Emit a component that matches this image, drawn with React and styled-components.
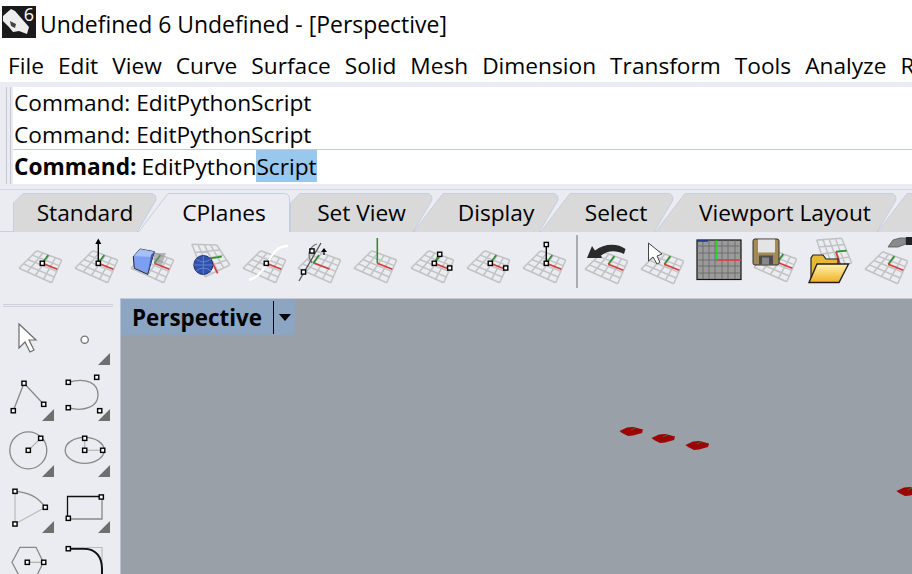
import React from "react";
import styled, { createGlobalStyle } from "styled-components";

const GlobalStyle = createGlobalStyle`
  html, body {
    margin: 0;
    padding: 0;
    background: #ebecf1;
    overflow: hidden;
  }
  * { box-sizing: border-box; }
`;

const Page = styled.div`
  width: 912px;
  height: 574px;
  display: flex;
  flex-direction: column;
  overflow: hidden;
  font-family: "Open Sans", "Noto Sans", sans-serif;
  color: #000;
  background: #ebecf1;
`;

const TitleBar = styled.div`
  height: 48px;
  flex: none;
  display: flex;
  align-items: center;
  gap: 4px;
  padding: 0 0 0 2px;
  background: #fff;
  font-size: 22.95px;
  white-space: nowrap;
`;

const Logo = styled.div`
  position: relative;
  width: 34px;
  height: 32px;
  margin-top: -4px;
  background: #1a1a1a;
  color: #fff;
`;

const LogoNumber = styled.span`
  position: absolute;
  right: 2px;
  top: -4px;
  font-size: 18px;
`;

const MenuBar = styled.div`
  height: 34px;
  flex: none;
  display: flex;
  align-items: center;
  gap: 14px;
  padding: 0 0 0 8px;
  background: #fff;
  font-size: 22.7px;
  white-space: nowrap;
  overflow: hidden;
`;

const CommandDock = styled.div`
  height: 108px;
  flex: none;
  display: flex;
  padding: 5px 0;
  border-bottom: 1px solid #d5d8e2;
`;

const Grip = styled.div`
  width: 13px;
  flex: none;
  &::before {
    content: "";
    display: block;
    margin-left: 6px;
    width: 3px;
    height: 100%;
    border-left: 1px solid #c3c7d3;
    border-right: 1px solid #c3c7d3;
  }
`;

const CommandPanel = styled.div`
  flex: 1;
  background: #fff;
  display: flex;
  flex-direction: column;
  font-size: 22.7px;
  white-space: nowrap;
`;

const HistoryLine = styled.div`
  height: 32px;
  line-height: 32px;
  padding-left: 1px;
`;

const Prompt = styled.div`
  height: 36px;
  line-height: 33px;
  margin-top: -2px;
  padding-left: 1px;
  border-top: 1px solid #c3cad8;
`;

const PromptLabel = styled.b`
  margin-right: 5px;
`;

const Selected = styled.span`
  display: inline-block;
  height: 32px;
  background: #99c8ee;
`;

const ToolDock = styled.div`
  height: 108px;
  flex: none;
  display: flex;
  flex-direction: column;
  padding-top: 3px;
`;

const TabRow = styled.div`
  height: 39px;
  flex: none;
  display: flex;
  padding-left: 13px;
`;

const TabBox = styled.div`
  position: relative;
  flex: none;
  width: ${(p) => p.$width}px;
  margin-left: ${(p) => p.$overlap}px;
  padding-left: ${(p) => p.$inset}px;
  z-index: ${(p) => (p.$active ? 2 : 1)};
  display: flex;
  align-items: center;
  justify-content: center;
  font-size: 22.7px;
  white-space: nowrap;
  span { position: relative; }
  svg {
    position: absolute;
    left: 0;
    top: 0;
  }
`;

const IconRow = styled.div`
  display: flex;
  align-items: flex-start;
  padding: 3px 0 0 16px;
  border-top: 1px solid #c6cfdf;
  margin-top: -1px;
  height: 66px;
  overflow: hidden;
`;

const ToolSlot = styled.div`
  width: 56px;
  height: 56px;
  flex: none;
  svg { display: block; }
`;

const Separator = styled.div`
  width: 2px;
  height: 53px;
  margin-right: 4px;
  flex: none;
  background: #a9acb3;
`;

const Workspace = styled.div`
  flex: 1;
  min-height: 0;
  display: flex;
`;

const SidePanel = styled.div`
  width: 120px;
  flex: none;
  display: flex;
  flex-direction: column;
`;

const SideHandle = styled.div`
  height: 5px;
  margin: 6px 7px 0 3px;
  flex: none;
  border-top: 1px solid #cdd0da;
  &::after {
    content: "";
    display: block;
    margin-top: 1px;
    border-top: 1px solid #cdd0da;
  }
`;

const SideGrid = styled.div`
  display: grid;
  grid-template-columns: 56px 56px;
  grid-auto-rows: 56px;
`;

const Viewport = styled.div`
  position: relative;
  flex: 1;
  background: #9aa0a7;
  border-top: 1px solid #c5c9d2;
  border-left: 1px solid #b9c3d3;
  overflow: hidden;
`;

const ViewTab = styled.div`
  width: 174px;
  height: 36px;
  display: flex;
  align-items: center;
  padding-left: 11px;
  background: #8ba5c3;
  border-bottom-right-radius: 4px;
  font-size: 22.4px;
  font-weight: 700;
  white-space: nowrap;
`;

const ViewName = styled.span`
  width: 141px;
  flex: none;
`;

const ViewMenu = styled.div`
  height: 33px;
  flex: 1;
  display: flex;
  align-items: center;
  justify-content: center;
  border-left: 1px solid #000;
  &::after {
    content: "";
    border-left: 6px solid transparent;
    border-right: 6px solid transparent;
    border-top: 7px solid #000;
  }
`;

const Marker = styled.svg`
  position: absolute;
  left: ${(p) => p.$x}px;
  top: ${(p) => p.$y}px;
`;

// toolbar icon helpers

const lerp = (a, b, t) => [a[0] + (b[0] - a[0]) * t, a[1] + (b[1] - a[1]) * t];

const FLAT_PLANE = [[20.7, 15.7], [45.7, 25], [35.7, 47.7], [3, 33.3]];

const PlaneGrid = ({ dx = 0, dy = 0, corners = FLAT_PLANE }) => {
  const [top, right, bottom, left] = corners;
  const lines = [];
  for (let i = 0; i <= 4; i++) {
    const t = i / 4;
    const a = lerp(top, right, t);
    const b = lerp(left, bottom, t);
    const c = lerp(top, left, t);
    const d = lerp(right, bottom, t);
    lines.push(`M${a[0]} ${a[1]}L${b[0]} ${b[1]}M${c[0]} ${c[1]}L${d[0]} ${d[1]}`);
  }
  return (
    <path
      transform={`translate(${dx} ${dy})`}
      d={lines.join("")}
      fill="none"
      stroke="#c2c2c4"
      strokeWidth="1.5"
    />
  );
};

const Axes = ({ dx = 0, dy = 0 }) => (
  <g transform={`translate(${dx} ${dy})`} fill="none" strokeWidth="1.7">
    <path d="M26.3 28.3L32.3 20" stroke="#2f8f2f" />
    <path d="M26.3 28.3L41.3 34.3" stroke="#d43a3a" />
  </g>
);

const Handle = ({ x, y, size = 4.2 }) => (
  <rect
    x={x - size / 2}
    y={y - size / 2}
    width={size}
    height={size}
    fill="#fff"
    stroke="#000"
    strokeWidth="1.4"
  />
);

const Base = ({ children }) => (
  <>
    <PlaneGrid />
    <Axes />
    {children}
    <Handle x={26.3} y={28.3} />
  </>
);

const toolIcons = [
  <Base key="a" />,
  <Base key="b">
    <path d="M26.3 28V5" stroke="#000" strokeWidth="1.4" />
    <path d="M23.3 9L26.3 3.5L29.3 9Z" fill="#000" />
  </Base>,
  <>
    <PlaneGrid />
    <Axes />
    <path d="M26 18H38L34 30L26 29Z" fill="#8a8a8a" opacity="0.55" />
    <path
      d="M12 14L26.3 16.7L19.7 39.3L6.3 33.3L5.3 21.7Z"
      fill="#7d9ff2"
      stroke="#222"
      strokeWidth="1"
    />
    <path d="M12 14L26.3 16.7L23 22L6 21Z" fill="#a7bff8" />
    <path d="M23 20L26.3 16.7L19.7 39.3Z" fill="#3e5ab5" />
  </>,
  <>
    <PlaneGrid corners={[[7.7, 9.3], [32.7, 10], [46, 30], [21, 41.7]]} />
    <path d="M26 23.3L37.7 21.7" stroke="#2f8f2f" strokeWidth="1.7" />
    <path d="M26 23.3L33.7 38.3" stroke="#d43a3a" strokeWidth="1.7" />
    <circle cx="19.3" cy="30" r="9.5" fill="#3153ad" stroke="#1f2f6c" strokeWidth="1" />
    <path
      d="M10 30H29M19.3 20.5V39.5M12 24Q19 30 27 24M12 36Q19 30 27 36"
      stroke="#6f8ad8"
      strokeWidth="0.8"
      fill="none"
    />
  </>,
  <Base key="e">
    <path d="M48 11C36 11 32 20 26 30C22 37 17 43 9 45" fill="none" stroke="#fff" strokeWidth="2.4" />
  </Base>,
  <>
    <g transform="translate(-1 0)">
      <PlaneGrid />
    </g>
    <path d="M16 28C10 20 14 11 21 9" fill="none" stroke="#777" strokeWidth="1.3" />
    <path d="M3 46L25 8" stroke="#555" strokeWidth="1.3" />
    <path d="M17.5 28L33.5 34" stroke="#d43a3a" strokeWidth="1.8" />
    <path d="M17.5 28L23 20" stroke="#2f8f2f" strokeWidth="1.8" />
    <path d="M25 17L28 13L31 17Z" fill="#000" />
    <path d="M28 14V20" stroke="#000" strokeWidth="1.2" />
    <Handle x={16} y={16} />
    <Handle x={7.5} y={37} />
  </>,
  <>
    <PlaneGrid dx={-1} />
    <path d="M25.3 28.3V3" stroke="#2f8f2f" strokeWidth="1.6" />
    <path d="M25.3 28.3L40.3 34.3" stroke="#d43a3a" strokeWidth="1.7" />
  </>,
  <Base key="h">
    <path d="M26.3 28.3L32 17" stroke="#2f8f2f" strokeWidth="1.4" />
    <Handle x={31.7} y={19.3} />
    <Handle x={41.7} y={33} />
  </Base>,
  <Base key="i">
    <Handle x={41.7} y={33} />
  </Base>,
  <Base key="j">
    <path d="M26.3 28V7" stroke="#000" strokeWidth="1.4" />
    <Handle x={26.3} y={9.5} />
  </Base>,
];

const rightIcons = [
  <>
    <PlaneGrid dy={1} />
    <Axes dy={1} />
    <path
      d="M5 23L10 11L13 15.5C22 8 36 8 43.5 14L42 19C34 15 26 15 19 20.5L20 23Z"
      fill="#2a2a2a"
    />
  </>,
  <>
    <PlaneGrid dy={1} />
    <Axes dy={1} />
    <path
      d="M10.5 8V26L15 22L19 29L22 27.5L19 21L24 19Z"
      fill="#fff"
      stroke="#444"
      strokeWidth="1"
    />
  </>,
  <>
    <rect x="3" y="5" width="44" height="39.5" fill="#9b9b9b" stroke="#111" strokeWidth="1.2" />
    <path
      d="M9 5V44M15 5V44M21 5V44M28 5V44M34 5V44M41 5V44M3 11H47M3 18H47M3 25H47M3 31H47M3 38H47"
      stroke="#666"
      strokeWidth="0.8"
      fill="none"
    />
    <path d="M3.5 6H14" stroke="#223a90" strokeWidth="1.6" />
    <path d="M22.7 5.5V25" stroke="#2fd02f" strokeWidth="1.6" />
    <path d="M22.7 25H47" stroke="#e04545" strokeWidth="1.6" />
  </>,
  <>
    <PlaneGrid dx={1} dy={-1} />
    <Axes dx={1} dy={-1} />
    <rect x="3" y="4" width="26" height="26" rx="2" fill="#a08a55" stroke="#333" strokeWidth="1" />
    <rect x="8" y="4.5" width="17" height="13" fill="#e4e4e4" />
    <rect x="9" y="20.5" width="14" height="9" fill="#4c4c4c" />
    <rect x="12" y="22.5" width="7" height="7" fill="#888" />
  </>,
  <>
    <PlaneGrid corners={[[10.7, 5], [35.7, 3.3], [45.7, 28.3], [20, 33]]} />
    <path d="M30 16.7L40.7 15.7" stroke="#2f8f2f" strokeWidth="1.7" />
    <path d="M30 16.7L34 29.3" stroke="#d43a3a" strokeWidth="1.9" />
    <defs>
      <linearGradient id="folderFill" x1="0" y1="0" x2="0" y2="1">
        <stop offset="0" stopColor="#fff3b0" />
        <stop offset="1" stopColor="#f0b020" />
      </linearGradient>
    </defs>
    <path d="M5 46V23L7 20H17L20 24H32V29" fill="#e8b830" stroke="#222" strokeWidth="1.2" />
    <path d="M3 47.5L11 29H42.5L33 47.5Z" fill="url(#folderFill)" stroke="#222" strokeWidth="1.4" />
  </>,
  <>
    <PlaneGrid dy={1} />
    <Axes dy={1} />
    <path d="M26 12L31 5L38 3H44V9L36 12Z" fill="#8a8a8a" stroke="#555" strokeWidth="0.8" />
    <path d="M44 2H50V10H44Z" fill="#222" />
  </>,
];

const Corner = () => <path d="M42 56L54 44V56Z" fill="#6f6f6f" />;

const sideIcons = [
  <>
    <path
      d="M19 15L36 31H29L34 41L30 43L25 33L19 39Z"
      fill="#fff"
      stroke="#6b6b6b"
      strokeWidth="1.2"
    />
  </>,
  <>
    <circle cx="28.7" cy="30.7" r="3.6" fill="#fff" stroke="#777" strokeWidth="1.4" />
    <Corner />
  </>,
  <>
    <path d="M13.3 45.7L24 18.3L43.7 39.3" fill="none" stroke="#888" strokeWidth="1.3" />
    <Handle x={24} y={18.3} />
    <Handle x={13.3} y={45.7} />
    <Handle x={43.7} y={39.3} />
    <Corner />
  </>,
  <>
    <path d="M12.3 17.3C30 12 42 18 42 30C42 42 28 47 12.3 42.7" fill="none" stroke="#888" strokeWidth="1.3" />
    <Handle x={12.3} y={17.3} />
    <Handle x={40.7} y={12.3} />
    <Handle x={12.3} y={42.7} />
    <Handle x={43.7} y={45.7} />
    <Corner />
  </>,
  <>
    <circle cx="28.3" cy="29.3" r="18.5" fill="none" stroke="#888" strokeWidth="1.3" />
    <path d="M28.3 29.3L40.7 17.3" stroke="#aaa" strokeWidth="1.1" />
    <Handle x={28.3} y={29.3} />
    <Handle x={40.7} y={17.3} />
    <Corner />
  </>,
  <>
    <ellipse cx="28.7" cy="29.3" rx="19.5" ry="13" fill="none" stroke="#888" strokeWidth="1.3" />
    <path d="M28.7 17.3V29.3H46.7" fill="none" stroke="#aaa" strokeWidth="1.1" />
    <Handle x={28.7} y={29.3} />
    <Handle x={28.7} y={17.3} />
    <Handle x={46.7} y={29.3} />
    <Corner />
  </>,
  <>
    <path d="M15 14.3V47L45.3 30.3" fill="none" stroke="#bbb" strokeWidth="1.2" />
    <path d="M15 14.3C28 15 39 21 45.3 30.3" fill="none" stroke="#888" strokeWidth="1.3" />
    <Handle x={15} y={14.3} />
    <Handle x={45.3} y={30.3} />
    <Handle x={15} y={47} />
    <Corner />
  </>,
  <>
    <path d="M11.5 42H46V20" fill="none" stroke="#888" strokeWidth="1.3" />
    <path d="M11.5 41V19.5H45" fill="none" stroke="#111" strokeWidth="1.3" />
    <Handle x={12.3} y={41.3} />
    <Handle x={45.3} y={20} />
    <Corner />
  </>,
  <>
    <path d="M12 29.3L20 14.3H36L43.3 29.3L36 44.3H20Z" fill="none" stroke="#888" strokeWidth="1.3" />
    <path d="M27.3 29.3H43.7" stroke="#aaa" strokeWidth="1.1" />
    <Handle x={27.3} y={29.3} />
    <Handle x={43.7} y={29.3} />
  </>,
  <>
    <path d="M30 14.5H46V36" fill="none" stroke="#bbb" strokeWidth="1.2" />
    <path d="M12.3 15.7H28C40 15.7 46 24 46 36V56" fill="none" stroke="#111" strokeWidth="2" />
    <Handle x={12.3} y={15.7} />
  </>,
];

const tabs = [
  { label: "Standard", width: 144, overlap: 0, inset: 0, notch: true },
  { label: "CPlanes", width: 152, overlap: -19, inset: 20, active: true },
  { label: "Set View", width: 143, overlap: 0, inset: 0, notch: true },
  { label: "Display", width: 146, overlap: -20, inset: 20 },
  { label: "Select", width: 134, overlap: -19, inset: 18 },
  { label: "Viewport Layout", width: 242, overlap: -19, inset: 18 },
  { label: "", width: 60, overlap: -20, inset: 0 },
];

const tabPath = ({ width: w, notch, active }) => {
  const left = notch ? "M0.5 39V10L10 0.5" : "M0.5 39L30 0.5";
  const right = active
    ? `H${w - 6}Q${w - 0.5} 0.5 ${w - 0.5} 7V39`
    : `H${w - 6}Q${w - 1} 0.5 ${w - 1} 7L${w - 20} 39`;
  return `${left}${right}`;
};

function Tab(props) {
  const { label, width, overlap, inset, active } = props;
  return (
    <TabBox $width={width} $overlap={overlap} $inset={inset} $active={active}>
      <svg width={width} height="40" viewBox={`0 0 ${width} 40`}>
        <path
          d={tabPath(props)}
          fill={active ? "#ebecf1" : "#d9d9d9"}
          stroke="#c5cfe0"
          strokeWidth="1"
        />
      </svg>
      <span>{label}</span>
    </TabBox>
  );
}

const ToolIcon = ({ children }) => (
  <ToolSlot>
    <svg width="56" height="56" viewBox="0 0 56 56">
      {children}
    </svg>
  </ToolSlot>
);

const menus = [
  "File",
  "Edit",
  "View",
  "Curve",
  "Surface",
  "Solid",
  "Mesh",
  "Dimension",
  "Transform",
  "Tools",
  "Analyze",
  "Render",
];

const markers = [
  { x: 498, y: 127 },
  { x: 530, y: 134 },
  { x: 564, y: 141 },
  { x: 775, y: 187 },
];

export default function App() {
  return (
    <Page>
      <GlobalStyle />
      <TitleBar>
        <Logo>
          <svg width="34" height="32" viewBox="0 0 34 32">
            <path
              d="M1 10L9 3L13 5L20 13L27 21L25 28L17 25L11 26L7 21L1 15Z"
              fill="#eee"
            />
            <path d="M8 15L14 18L13 22L9 20Z" fill="#444" />
          </svg>
          <LogoNumber>6</LogoNumber>
        </Logo>
        <span>Undefined 6 Undefined - [Perspective]</span>
      </TitleBar>
      <MenuBar>
        {menus.map((m) => (
          <span key={m}>{m}</span>
        ))}
      </MenuBar>
      <CommandDock>
        <Grip />
        <CommandPanel>
          <HistoryLine>Command: EditPythonScript</HistoryLine>
          <HistoryLine>Command: EditPythonScript</HistoryLine>
          <Prompt>
            <PromptLabel>Command:</PromptLabel>
            EditPython<Selected>Script</Selected>
          </Prompt>
        </CommandPanel>
      </CommandDock>
      <ToolDock>
        <TabRow>
          {tabs.map((t, i) => (
            <Tab key={i} {...t} />
          ))}
        </TabRow>
        <IconRow>
          {toolIcons.map((icon, i) => (
            <ToolIcon key={i}>{icon}</ToolIcon>
          ))}
          <Separator />
          {rightIcons.map((icon, i) => (
            <ToolIcon key={i}>{icon}</ToolIcon>
          ))}
        </IconRow>
      </ToolDock>
      <Workspace>
        <SidePanel>
          <SideHandle />
          <SideGrid>
            {sideIcons.map((icon, i) => (
              <ToolSlot key={i}>
                <svg width="56" height="56" viewBox="0 0 56 56">
                  {icon}
                </svg>
              </ToolSlot>
            ))}
          </SideGrid>
        </SidePanel>
        <Viewport>
          <ViewTab>
            <ViewName>Perspective</ViewName>
            <ViewMenu />
          </ViewTab>
          {markers.map((m, i) => (
            <Marker key={i} $x={m.x} $y={m.y} width="24" height="11" viewBox="0 0 24 11">
              <path d="M0.5 5L8 1.5L14 1L24 3.5L23 7L14 9.5L9 10L3 7Z" fill="#9b0505" />
              <path d="M12 4L17 1.5" stroke="#2f7a1f" strokeWidth="1" />
            </Marker>
          ))}
        </Viewport>
      </Workspace>
    </Page>
  );
}
